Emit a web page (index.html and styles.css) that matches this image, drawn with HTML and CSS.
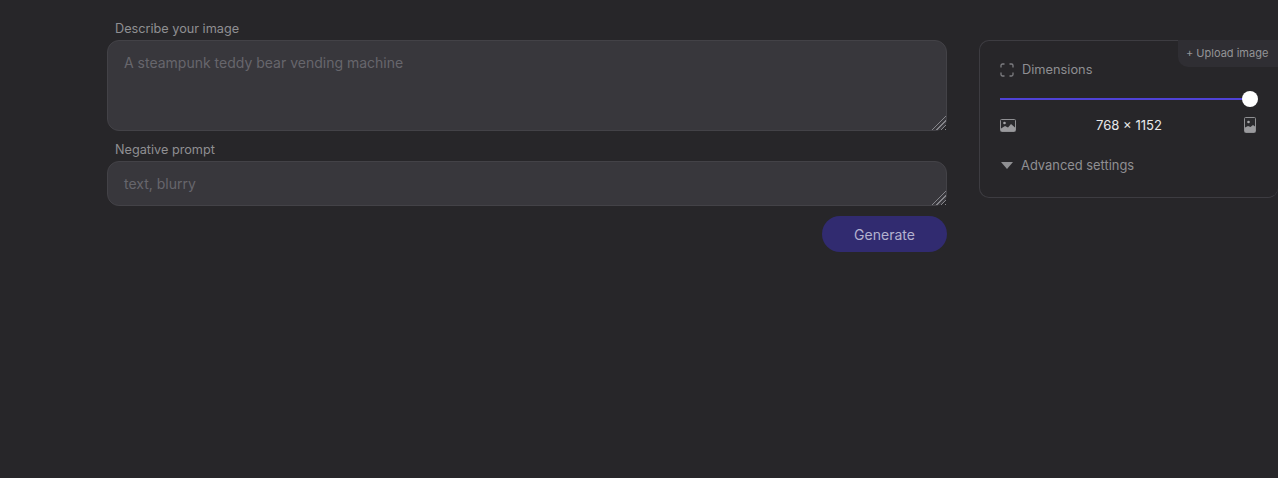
FILE: index.html
```html
<!DOCTYPE html>
<html lang="en">
<head>
    <meta charset="UTF-8">
    <title>Generate image</title>
    <link rel="stylesheet" href="styles.css">
</head>
<body>
    <div class="page">
        <form class="prompt-form">
            <label class="field-label" for="prompt">Describe your image</label>
            <textarea class="field field-large" id="prompt" placeholder="A steampunk teddy bear vending machine"></textarea>
            <label class="field-label field-label-next" for="negative">Negative prompt</label>
            <textarea class="field field-small" id="negative" placeholder="text, blurry"></textarea>
            <div class="actions">
                <button class="generate" type="button">Generate</button>
            </div>
        </form>

        <aside class="settings">
            <button class="upload" type="button">+ Upload image</button>
            <div class="dimensions-title">
                <svg class="icon-frame" width="14" height="14" viewBox="0 0 14 14" fill="none" stroke="#7d7d81" stroke-width="1.3">
                    <path d="M1 4.500V2.500A1.500 1.500 0 0 1 2.500 1H4.500M9.500 1H11.500A1.500 1.500 0 0 1 13 2.500V4.500M13 9.500V11.500A1.500 1.500 0 0 1 11.500 13H9.500M4.500 13H2.500A1.500 1.500 0 0 1 1 11.500V9.500"/>
                </svg>
                <span>Dimensions</span>
            </div>
            <div class="slider">
                <div class="slider-track"></div>
                <div class="slider-thumb"></div>
            </div>
            <div class="ratio-row">
                <svg width="16" height="13" viewBox="0 0 16 13">
                    <rect x="0.500" y="0.500" width="15" height="12" rx="1" fill="#2a2a2d" stroke="#8f8f92"/>
                    <circle cx="4.500" cy="4" r="1.300" fill="#a5a5a8"/>
                    <path d="M1 12V9.500L5 7L8 8.500L11 5L15 8.500V12Z" fill="#9a9a9d"/>
                </svg>
                <span class="ratio-value">768 × 1152</span>
                <svg width="12" height="16" viewBox="0 0 12 16">
                    <rect x="0.500" y="0.500" width="11" height="15" rx="1" fill="#2a2a2d" stroke="#8f8f92"/>
                    <circle cx="4.500" cy="5" r="1.300" fill="#a5a5a8"/>
                    <path d="M1 15V10.500L4 9L6.500 10L9 8L11 9.500V15Z" fill="#9a9a9d"/>
                </svg>
            </div>
            <div class="advanced">
                <span class="advanced-arrow"></span>
                <span>Advanced settings</span>
            </div>
        </aside>
    </div>
</body>
</html>
```

FILE: styles.css
```css
html, body {
    margin: 0;
    height: 100%;
    overflow: hidden;
}

body {
    background-color: #272629;
    font-family: Inter, "Liberation Sans", sans-serif;
    font-size: 14px;
    color: #9a9a9d;
}

.page {
    display: flex;
    align-items: flex-start;
    gap: 32px;
    box-sizing: border-box;
    width: 100%;
    padding: 21px 0 0 107px;
}

.prompt-form {
    display: flex;
    flex-direction: column;
    flex: none;
    width: 840px;
}

.field-label {
    display: block;
    height: 19px;
    padding-left: 8px;
    line-height: 15px;
    font-size: 12.700px;
    color: #8f8f92;
}

.field-label-next {
    margin-top: 11px;
}

.field {
    display: block;
    box-sizing: border-box;
    width: 100%;
    padding: 13px 16px;
    background-color: #38373c;
    border: 1px solid #434247;
    border-radius: 12px;
    outline: none;
    font-family: Inter, "Liberation Sans", sans-serif;
    font-size: 14px;
    line-height: 17px;
    color: #ddd;
}

.field::placeholder {
    color: #67666c;
}

/* bigger grip than the default one */
.field::-webkit-resizer {
    background:
        linear-gradient(135deg, #38373c 50%, transparent 50%),
        repeating-linear-gradient(135deg, transparent 0, transparent 2px, #85858a 2px, #85858a 3px);
}

.field-large {
    height: 91px;
}

.field-small {
    height: 45px;
}

.actions {
    display: flex;
    justify-content: flex-end;
    margin-top: 10px;
}

.generate {
    width: 125px;
    height: 36px;
    background-color: #312b70;
    border: none;
    border-radius: 18px;
    font-family: Inter, "Liberation Sans", sans-serif;
    font-size: 14px;
    color: #b4b2cf;
}

.settings {
    position: relative;
    flex: 1;
    box-sizing: border-box;
    height: 158px;
    margin-top: 19px;
    padding: 20px 0 0 20px;
    border: 1px solid #3d3c41;
    border-right: none;
    border-radius: 10px;
}

.upload {
    position: absolute;
    top: -1px;
    right: 0;
    width: 100px;
    height: 27px;
    padding: 0 0 2px 8px;
    text-align: left;
    background-color: #2f2e33;
    border: none;
    border-radius: 0 0 0 10px;
    font-family: Inter, "Liberation Sans", sans-serif;
    font-size: 11px;
    color: #949497;
}

.dimensions-title {
    display: flex;
    align-items: center;
    gap: 8px;
    height: 17px;
    font-size: 12.800px;
    color: #8f8f92;
}

.slider {
    position: relative;
    width: 258px;
    height: 16px;
    margin-top: 13px;
}

.slider-track {
    position: absolute;
    top: 7px;
    left: 0;
    right: 8px;
    height: 2px;
    background-color: #4f42d6;
}

.slider-thumb {
    position: absolute;
    top: 0;
    right: 0;
    width: 16px;
    height: 16px;
    border-radius: 50%;
    background-color: #fff;
}

.ratio-row {
    display: flex;
    align-items: center;
    justify-content: space-between;
    width: 256px;
    height: 16px;
    margin-top: 10px;
}

.ratio-value {
    margin-right: 2px;
    font-size: 13.100px;
    color: #e8e8ea;
}

.advanced {
    display: flex;
    align-items: center;
    gap: 8px;
    height: 17px;
    margin-top: 24px;
    padding-left: 1px;
    font-size: 12.900px;
    color: #8f8f92;
}

.advanced-arrow {
    width: 0;
    height: 0;
    border-left: 6px solid transparent;
    border-right: 6px solid transparent;
    border-top: 7px solid #8f8f92;
}
```
